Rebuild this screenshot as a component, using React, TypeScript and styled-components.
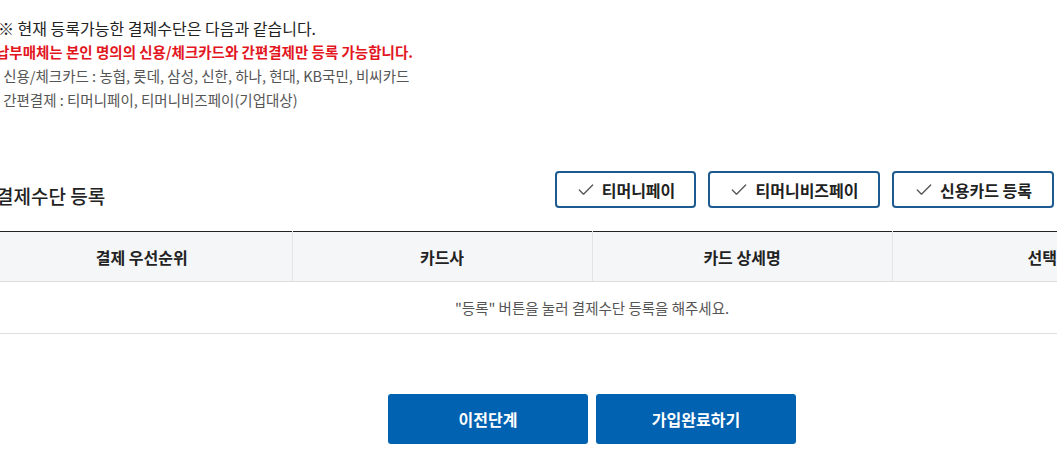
import styled, { createGlobalStyle } from "styled-components";
import { Check } from "lucide-react";

const GlobalStyle = createGlobalStyle`
  html, body {
    margin: 0;
    padding: 0;
    background: #fff;
    overflow: hidden;
  }
  body {
    font-family: "Noto Sans CJK KR", "Noto Sans", sans-serif;
    color: #222;
  }
`;

const Page = styled.div`
  width: 1200px;
  margin-left: -8px;
  padding-top: 16px;
`;

const Notice = styled.div`
  padding-left: 6px;
`;

const NoticeTitle = styled.p`
  margin: 0;
  font-size: 16px;
  line-height: 24px;
  color: #222;
`;

const NoticeWarn = styled.p`
  margin: 0;
  font-size: 14.5px;
  line-height: 24px;
  font-weight: 700;
  color: #e3161f;
  margin-left: -2px;
`;

const NoticeList = styled.ul`
  margin: 0;
  padding: 0;
  list-style: none;
`;

const NoticeItem = styled.li`
  font-size: 14.5px;
  line-height: 24px;
  color: #555;
  margin-left: -9px;

  &::before {
    content: "·";
    margin-right: 6px;
  }
`;

const SectionHead = styled.div`
  display: flex;
  align-items: center;
  justify-content: space-between;
  margin-top: 58px;
  padding-right: 138px;
`;

const SectionTitle = styled.h2`
  margin: 12px 0 0 4px;
  font-size: 19px;
  font-weight: 500;
  color: #222;
`;

const ButtonGroup = styled.div`
  display: flex;
  gap: 12px;
`;

const OutlineButton = styled.button<{ $width: number }>`
  display: flex;
  align-items: center;
  justify-content: center;
  gap: 6px;
  width: ${(p) => p.$width}px;
  height: 37px;
  border: 2px solid #1d5a8f;
  border-radius: 4px;
  background: #fff;
  font-family: inherit;
  font-size: 16px;
  font-weight: 700;
  color: #222;
  cursor: pointer;

  svg {
    color: #555;
  }
`;

const Table = styled.table`
  width: 100%;
  margin-top: 22px;
  border-collapse: collapse;
  border-top: 1px solid #222;
  table-layout: fixed;
`;

const Th = styled.th`
  height: 47px;
  background: #f5f6f8;
  border-bottom: 1px solid #ddd;
  border-left: 1px solid #e4e4e4;
  font-size: 16px;
  font-weight: 700;
  color: #222;

  &:first-child {
    border-left: none;
  }
`;

const EmptyCell = styled.td`
  height: 49px;
  border-bottom: 1px solid #ddd;
  text-align: center;
  font-size: 14.5px;
  color: #555;
`;

const Footer = styled.div`
  display: flex;
  justify-content: center;
  gap: 8px;
  margin-top: 60px;
`;

const SolidButton = styled.button`
  width: 200px;
  height: 50px;
  border: none;
  border-radius: 3px;
  background: #0062b1;
  color: #fff;
  font-family: inherit;
  font-size: 16px;
  font-weight: 700;
  cursor: pointer;
`;

const payButtons = [
  { label: "티머니페이", width: 141 },
  { label: "티머니비즈페이", width: 172 },
  { label: "신용카드 등록", width: 162 },
];

const columns = ["결제 우선순위", "카드사", "카드 상세명", "선택"];

export default function App() {
  return (
    <>
      <GlobalStyle />
      <Page>
        <Notice>
          <NoticeTitle>※ 현재 등록가능한 결제수단은 다음과 같습니다.</NoticeTitle>
          <NoticeWarn>납부매체는 본인 명의의 신용/체크카드와 간편결제만 등록 가능합니다.</NoticeWarn>
          <NoticeList>
            <NoticeItem>신용/체크카드 : 농협, 롯데, 삼성, 신한, 하나, 현대, KB국민, 비씨카드</NoticeItem>
            <NoticeItem>간편결제 : 티머니페이, 티머니비즈페이(기업대상)</NoticeItem>
          </NoticeList>
        </Notice>

        <SectionHead>
          <SectionTitle>결제수단 등록</SectionTitle>
          <ButtonGroup>
            {payButtons.map((b) => (
              <OutlineButton key={b.label} $width={b.width}>
                <Check size={20} strokeWidth={1.6} />
                {b.label}
              </OutlineButton>
            ))}
          </ButtonGroup>
        </SectionHead>

        <Table>
          <thead>
            <tr>
              {columns.map((c) => (
                <Th key={c}>{c}</Th>
              ))}
            </tr>
          </thead>
          <tbody>
            <tr>
              <EmptyCell colSpan={4}>"등록" 버튼을 눌러 결제수단 등록을 해주세요.</EmptyCell>
            </tr>
          </tbody>
        </Table>

        <Footer>
          <SolidButton>이전단계</SolidButton>
          <SolidButton>가입완료하기</SolidButton>
        </Footer>
      </Page>
    </>
  );
}
